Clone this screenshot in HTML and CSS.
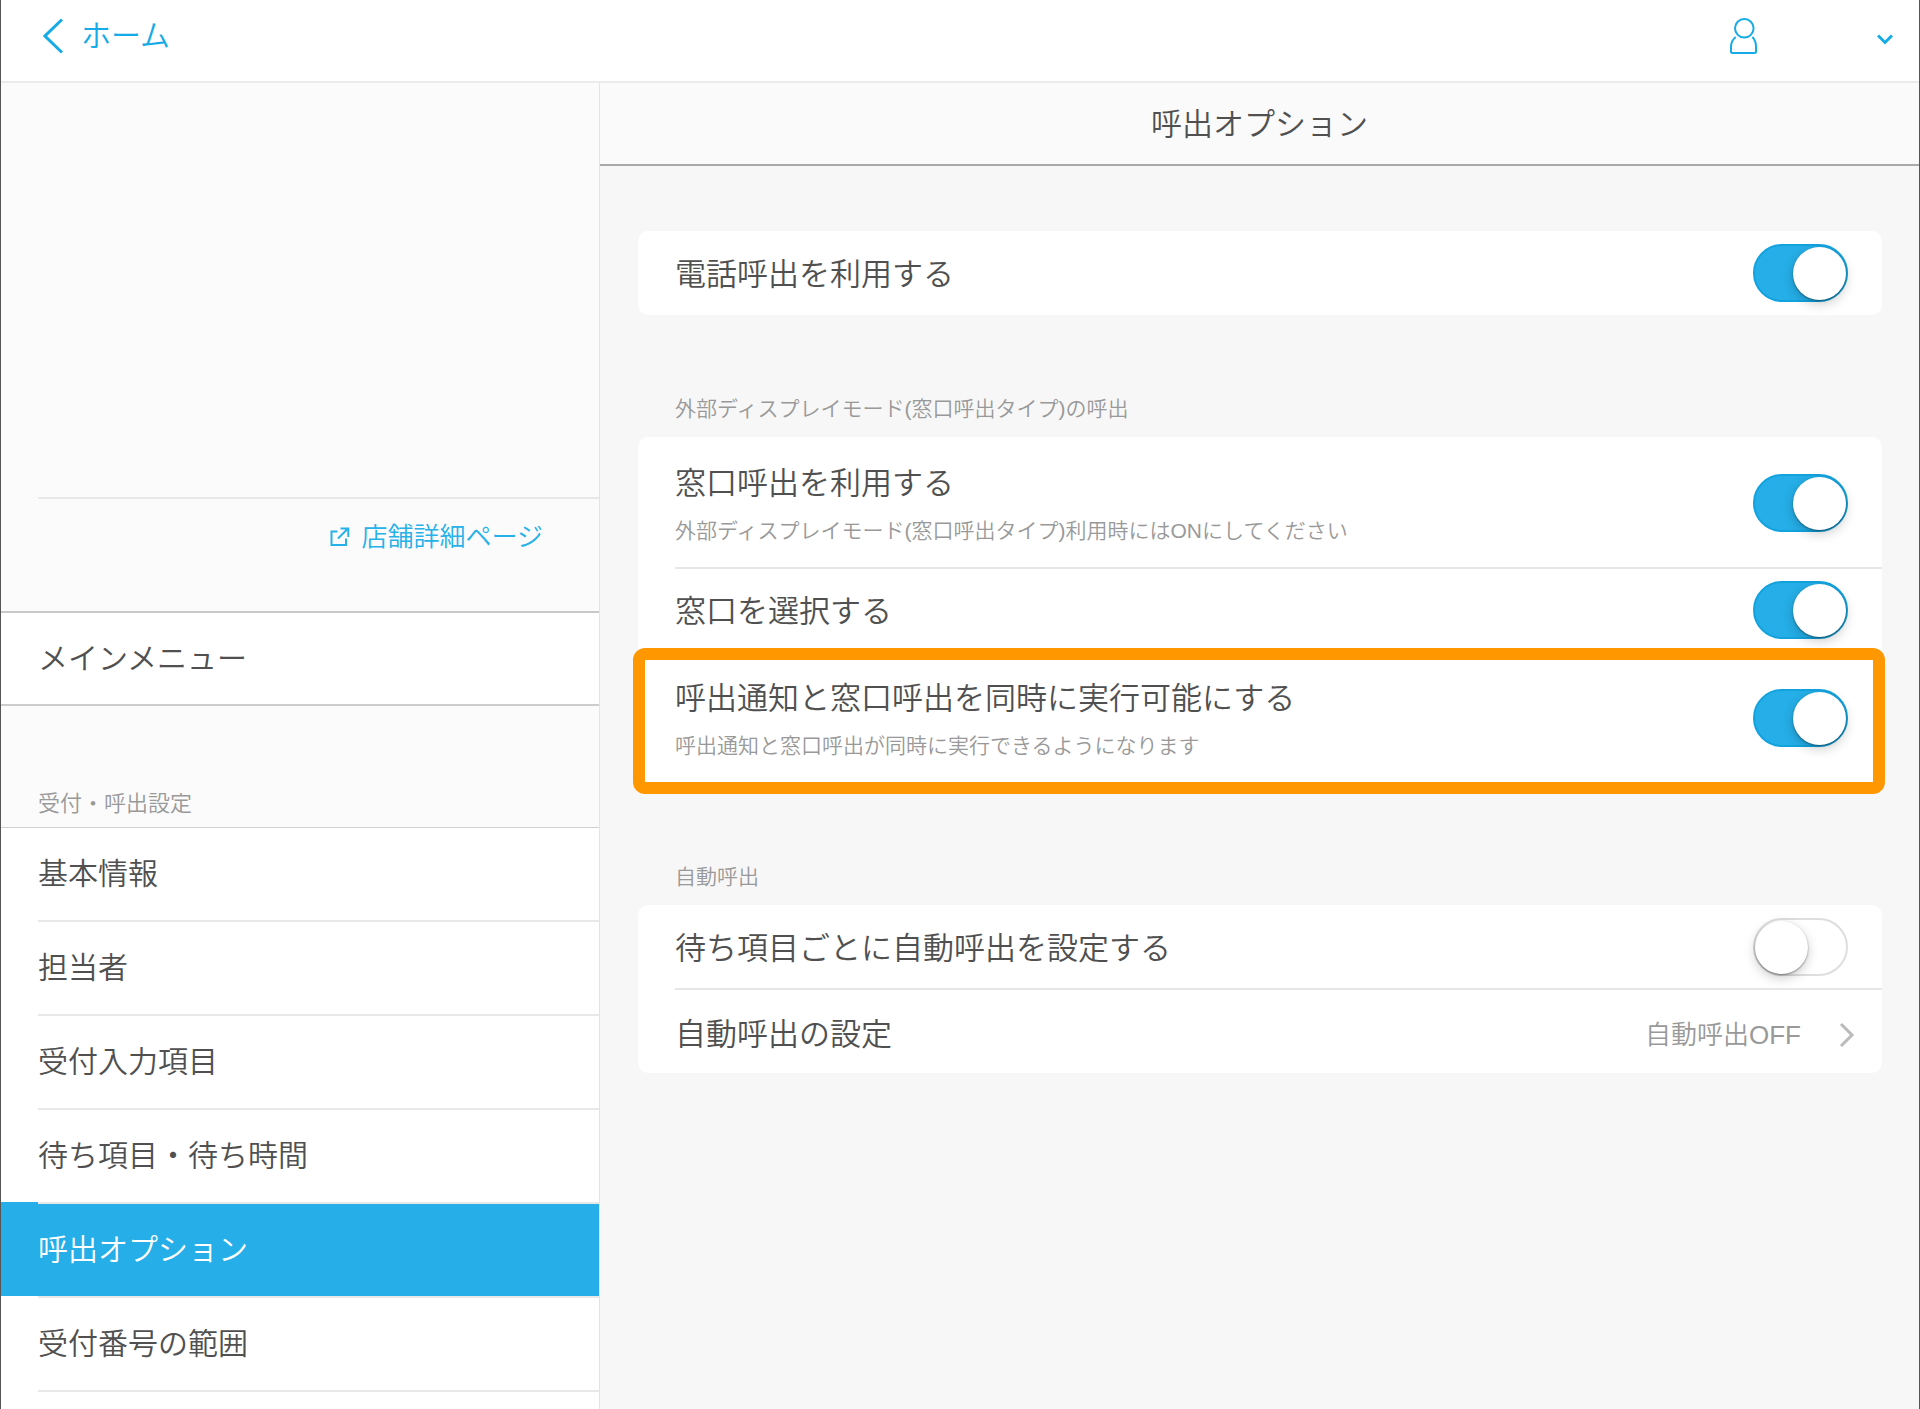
FILE: index.html
```html
<!DOCTYPE html>
<html lang="ja">
<head>
<meta charset="utf-8">
<meta name="viewport" content="width=device-width, initial-scale=1">
<title>呼出オプション</title>
<link rel="stylesheet" href="styles.css">
</head>
<body>
<div class="app">
  <header class="topbar">
    <a class="back" href="#">
      <svg width="20" height="36" viewBox="0 0 20 36" aria-hidden="true"><path d="M19 1.5 2 18l17 16.5"/></svg>
      <span>ホーム</span>
    </a>
    <button class="account" type="button" aria-label="アカウント">
      <svg width="27" height="36" viewBox="0 0 27 36" aria-hidden="true"><circle cx="14.3" cy="10.3" r="9.3"/><path d="M5.8 19C2.4 21.6 1 25 1 29v4.500q0 1.500 1.500 1.500h22q1.500 0 1.500-1.500V29c0-4-1-7.400-3.600-10"/></svg>
      <svg class="caret" width="16" height="11" viewBox="0 0 16 11" aria-hidden="true"><path d="m1 1.500 7 7 7-7"/></svg>
    </button>
  </header>

  <div class="columns">
    <nav class="sidebar">
      <div class="store">
        <div class="store-link-row">
          <a class="store-link" href="#">
            <svg width="20" height="20" viewBox="0 0 20 20" aria-hidden="true"><path d="M7.500 4.500H1.500v13.500h14.500v-6.500M8 11.500 18 1.500M10.500 1.500h7.800v8.500"/></svg>
            <span>店舗詳細ページ</span>
          </a>
        </div>
      </div>
      <a class="main-menu" href="#">メインメニュー</a>
      <h2 class="menu-heading">受付・呼出設定</h2>
      <ul class="menu">
        <li><a href="#"><span>基本情報</span></a></li>
        <li><a href="#"><span>担当者</span></a></li>
        <li><a href="#"><span>受付入力項目</span></a></li>
        <li><a href="#"><span>待ち項目・待ち時間</span></a></li>
        <li><a class="active" href="#" aria-current="page"><span>呼出オプション</span></a></li>
        <li><a href="#"><span>受付番号の範囲</span></a></li>
      </ul>
      <div class="menu-end"></div>
    </nav>

    <main class="content">
      <h1 class="title">呼出オプション</h1>
      <div class="settings">
        <section class="card">
          <label class="row">
            <span class="name">電話呼出を利用する</span>
            <input class="switch" type="checkbox" role="switch" checked>
          </label>
        </section>

        <h2 class="group">外部ディスプレイモード(窓口呼出タイプ)の呼出</h2>
        <section class="card">
          <label class="row tall">
            <span class="text">
              <span class="name">窓口呼出を利用する</span>
              <span class="note">外部ディスプレイモード(窓口呼出タイプ)利用時にはONにしてください</span>
            </span>
            <input class="switch" type="checkbox" role="switch" checked>
          </label>
          <label class="row">
            <span class="name">窓口を選択する</span>
            <input class="switch" type="checkbox" role="switch" checked>
          </label>
          <label class="row tall highlight">
            <span class="text">
              <span class="name">呼出通知と窓口呼出を同時に実行可能にする</span>
              <span class="note">呼出通知と窓口呼出が同時に実行できるようになります</span>
            </span>
            <input class="switch" type="checkbox" role="switch" checked>
          </label>
        </section>

        <h2 class="group">自動呼出</h2>
        <section class="card">
          <label class="row">
            <span class="name">待ち項目ごとに自動呼出を設定する</span>
            <input class="switch" type="checkbox" role="switch">
          </label>
          <a class="row link" href="#">
            <span class="name">自動呼出の設定</span>
            <span class="value">自動呼出OFF
              <svg width="16" height="26" viewBox="0 0 16 26" aria-hidden="true"><path d="m2 2 11 11L2 24"/></svg>
            </span>
          </a>
        </section>
      </div>
    </main>
  </div>
</div>
</body>
</html>
```
FILE: styles.css
```css
* { box-sizing: border-box; }

body {
  margin: 0;
  font-family: "Liberation Sans", "Noto Sans CJK JP", sans-serif;
  font-weight: 350;
  color: #505050;
  background: #f7f7f7;
}

a { color: inherit; text-decoration: none; }
h1, h2, ul { margin: 0; padding: 0; font-weight: inherit; }
ul { list-style: none; }

svg {
  display: block;
  flex: none;
  fill: none;
  stroke: currentColor;
  stroke-width: 2;
}

.app {
  display: flex;
  flex-direction: column;
  min-height: 100vh;
  border: solid #555;
  border-width: 0 1px;
}

/* Top bar */
.topbar {
  display: flex;
  align-items: center;
  justify-content: space-between;
  height: 83px;
  padding: 0 26px 10px 42px;
  background: #fff;
  border-bottom: 2px solid #ebebeb;
  color: #15abe6;
}
.back {
  display: flex;
  align-items: center;
  gap: 18px;
  font-size: 30px;
  line-height: 44px;
}
.back svg { stroke-width: 3; }
.account {
  display: flex;
  align-items: center;
  gap: 120px;
  padding: 0;
  border: 0;
  background: none;
  color: inherit;
}
.account .caret { margin-top: 8px; stroke-width: 3; }

/* Columns */
.columns {
  display: grid;
  grid-template-columns: 599px 1fr;
  flex: 1;
}

/* Sidebar */
.sidebar {
  display: flex;
  flex-direction: column;
  background: #fff;
  border-right: 1px solid #e4e4e4;
  font-size: 30px;
}
.store {
  height: 530px;
  padding: 414px 0 0 37px;
  background: #fbfbfb;
  border-bottom: 2px solid #c8c8c8;
}
.store-link-row {
  display: flex;
  justify-content: flex-end;
  padding: 18px 56px 0 0;
  border-top: 2px solid #e8e8e8;
}
.store-link {
  display: flex;
  align-items: center;
  gap: 12px;
  font-size: 26px;
  line-height: 40px;
  color: #27b1e9;
}
.main-menu {
  height: 93px;
  padding-left: 37px;
  line-height: 91px;
  border-bottom: 2px solid #ccc;
}
.menu-heading {
  height: 122px;
  padding: 82px 0 0 37px;
  font-size: 22px;
  line-height: 32px;
  color: #999;
  background: #fbfbfb;
  border-bottom: 1px solid #d0d0d0;
}
.menu a {
  display: block;
  padding-left: 37px;
}
.menu span {
  display: block;
  line-height: 92px;
  border-top: 2px solid #e8e8e8;
}
.menu li:first-child span { border-top: 0; }
.menu .active { background: #25aee7; color: #fff; }
.menu-end {
  margin-left: 37px;
  border-top: 2px solid #e8e8e8;
}

/* Content */
.title {
  height: 83px;
  font-size: 31px;
  line-height: 83px;
  text-align: center;
  background: #fafafa;
  border-bottom: 2px solid #aaa;
}
.settings { padding: 65px 37px 65px 38px; }
.group {
  padding: 77px 0 11px 37px;
  font-size: 21px;
  line-height: 34px;
  color: #999;
}
.card {
  background: #fff;
  border-radius: 10px;
}
.row {
  position: relative;
  display: flex;
  align-items: center;
  justify-content: space-between;
  min-height: 84px;
  padding: 0 34px 0 37px;
}
.row.tall { min-height: 131px; }
.row + .row:not(.highlight)::before {
  content: "";
  position: absolute;
  inset: -1px 0 auto 37px;
  border-top: 2px solid #e6e6e6;
}
.text {
  display: flex;
  flex-direction: column;
  padding-top: 9px;
}
.name { padding-top: 3px; font-size: 31px; line-height: 44px; }
.note { font-size: 21px; line-height: 50px; color: #999; }
.value {
  display: flex;
  align-items: center;
  gap: 38px;
  padding-top: 4px;
  font-size: 26px;
  line-height: 40px;
  color: #999;
}
.row.link { padding: 4px 27px 0 37px; }
.value svg { color: #bbb; stroke-width: 3; }

.highlight::after {
  content: "";
  position: absolute;
  inset: -4px -3px -11px -5px;
  border: 12px solid #ff9800;
  border-radius: 12px;
  pointer-events: none;
}

/* Switch */
.switch {
  appearance: none;
  flex: none;
  width: 95px;
  height: 58px;
  margin: 0;
  padding: 1px 0;
  border: 2px solid #dedede;
  border-radius: 29px;
  background: #fff;
}
.switch::before {
  content: "";
  display: block;
  width: 53px;
  height: 53px;
  border-radius: 50%;
  background: #fff;
  box-shadow: 0 1px 2px rgba(0, 0, 0, .4), 0 4px 12px rgba(0, 0, 0, .2);
}
.switch:checked {
  background: #25aee7;
  border-color: #12a3df;
}
.switch:checked::before { margin-left: auto; }
```
